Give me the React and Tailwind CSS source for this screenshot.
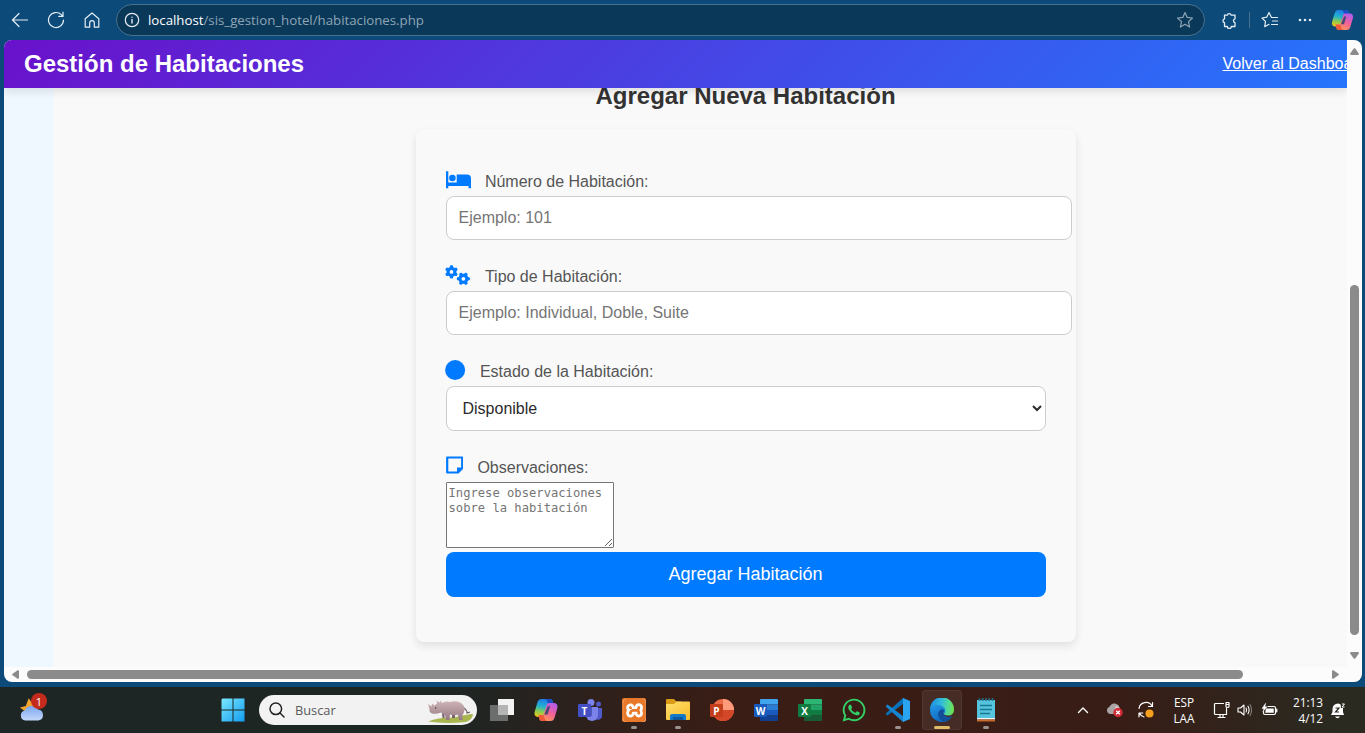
import React from "react";
import { FaGears, FaCircle, FaWhatsapp } from "react-icons/fa6";
import { SiXampp } from "react-icons/si";

const line = {
  fill: "none",
  stroke: "currentColor",
  strokeLinecap: "round",
  strokeLinejoin: "round",
};

function CopilotLogo({ id, className }) {
  return (
    <svg viewBox="0 0 24 24" className={className}>
      <defs>
        <linearGradient id={id + "a"} x1="0.4" y1="0" x2="0.2" y2="1">
          <stop offset="0" stopColor="#1f7be6" />
          <stop offset="0.4" stopColor="#22b3cf" />
          <stop offset="0.7" stopColor="#8fcb4d" />
          <stop offset="1" stopColor="#f5c915" />
        </linearGradient>
        <linearGradient id={id + "b"} x1="0.8" y1="0" x2="0.3" y2="1">
          <stop offset="0" stopColor="#b05cf0" />
          <stop offset="0.5" stopColor="#f0609a" />
          <stop offset="1" stopColor="#ff9a52" />
        </linearGradient>
      </defs>
      <path d="M14 1h2.200c1.400 0 2 .9 2.400 2.200L19.600 7h-3.200c-1.500 0-2.300.8-2.700 2.200L11.400 17c-.4 1.300-1.200 2-2.500 2H4.200C1 19 0 16.500.7 13.800L3.400 4.600C4.100 2.300 5.300 1 7.600 1z" fill={"url(#" + id + "a)"} />
      <path d="M14 1h2.200c1.400 0 2 .9 2.400 2.200L19.600 7h-3.200l-2.200-.3C13.500 3.500 12.800 1.600 11 1z" fill="#1a4fc4" />
      <path d="M10 23H7.800c-1.400 0-2-.9-2.400-2.200L4.400 17h3.200c1.500 0 2.300-.8 2.700-2.200L12.600 7c.4-1.300 1.200-2 2.500-2h4.700c3.200 0 4.200 2.500 3.500 5.200l-2.700 9.200c-.7 2.300-1.900 3.600-4.200 3.600z" fill={"url(#" + id + "b)"} />
      <path d="M10 23H7.800c-1.400 0-2-.9-2.400-2.200L4.400 17h3.200l2.200.3c.7 3.200 1.400 5.100 3.200 5.700z" fill="#ef5a3c" />
      <path d="M13.800 8.300h2.300l-2.500 8.200h-3.300z" fill="#0d3d66" opacity=".75" />
    </svg>
  );
}

function BrowserBar() {
  return (
    <div className="flex h-10 shrink-0 items-center text-[#e6eef5]">
      <svg viewBox="0 0 18 16" className="ml-[11px] h-4 w-[18px]" {...line} strokeWidth="1.2">
        <path d="M16.500 8H1.500M8 1.500L1.500 8L8 14.500" />
      </svg>
      <svg viewBox="0 0 18 18" className="ml-[18px] h-[18px] w-[18px]" {...line} strokeWidth="1.2">
        <path d="M16.500 9A7.500 7.500 0 1 1 14.300 3.700L16 5.400M16 1.200V5.400H11.800" />
      </svg>
      <svg viewBox="0 0 16 18" className="ml-[19px] h-[18px] w-4" {...line} strokeWidth="1.200">
        <path d="M1.200 7.800L8 2L14.800 7.800V16.200H10.300V12A2.300 2.300 0 0 0 5.700 12V16.200H1.200Z" />
      </svg>
      <div className="ml-4 flex h-8 w-[1089px] items-center rounded-full border border-[#48708f] bg-[#0a3859] pl-[7px] pr-[10px]">
        <svg viewBox="0 0 16 16" className="h-4 w-4" {...line} strokeWidth="1.200">
          <circle cx="8" cy="8" r="6.700" />
          <path d="M8 7.500V11M8 5.100V5.300" strokeWidth="1.400" />
        </svg>
        <span className="ml-[8px] whitespace-nowrap font-['Open_Sans',sans-serif] text-[13.25px] leading-5 text-[#8fa5b5]">
          <span className="text-white">localhost</span>/sis_gestion_hotel/habitaciones.php
        </span>
        <svg viewBox="0 0 18 18" className="ml-auto h-[18px] w-[18px] text-[#8fa5b5]" {...line} strokeWidth="1.200">
          <path d="M9 1.500L11.200 6.400L16.500 7L12.500 10.600L13.600 16L9 13.300L4.400 16L5.500 10.600L1.500 7L6.800 6.400Z" />
        </svg>
      </div>
      <svg viewBox="0 0 16 17" className="ml-4 h-[17px] w-4" {...line} strokeWidth="1.300">
        <path d="M3.500 3.200H6.300A2 2 0 0 1 10.200 3.200H14V6.800A2 2 0 0 0 14 10.700V14.500H10.300A2 2 0 0 1 6.300 14.500H3.500V10.700A2 2 0 0 1 3.500 6.800Z" />
      </svg>
      <div className="ml-[12px] h-4 w-px bg-[#48708f]" />
      <svg viewBox="0 0 18 18" className="ml-[11px] h-[18px] w-[18px]" {...line} strokeWidth="1.200">
        <path d="M16.500 6.500H10.500L8 1.500L5.700 6.200L1 7L4.500 10.400L3.700 15.700L8 13.300M11.500 10H16.500M10.500 13.500H16.500" />
      </svg>
      <svg viewBox="0 0 14 4" className="ml-[19px] h-1 w-[14px]" fill="currentColor">
        <circle cx="2" cy="2" r="1.300" />
        <circle cx="7" cy="2" r="1.300" />
        <circle cx="12" cy="2" r="1.300" />
      </svg>
      <CopilotLogo id="bar" className="ml-[19px] h-[22px] w-[23px]" />
    </div>
  );
}

function BedIcon() {
  return (
    <svg viewBox="0 0 25 20" className="h-5 w-[25px]" fill="currentColor">
      <path d="M0 1.200H2.300V12.500H10.700V4.500H21Q25 4.500 25 8.500V18.300H22.500V16H2.300V18.300H0Z" />
      <circle cx="6.400" cy="8" r="3.300" />
    </svg>
  );
}

function NoteIcon() {
  return (
    <svg viewBox="0 0 17.5 20" className="-mt-px h-5 w-[17.5px]" fill="none" stroke="currentColor" strokeWidth="2.200">
      <path d="M1.200 2.500H16.200V13.300L12 17.500H1.200Z" strokeLinejoin="round" />
      <path d="M11 18V12.500H16.800L16.500 13.300L12 17.800Z" fill="currentColor" stroke="none" />
    </svg>
  );
}

function Label({ icon, children }) {
  return (
    <label className="flex h-[26px] items-start gap-[14.4px] text-[#555]">
      <span className="text-[20px] text-[#007bff]">{icon}</span>
      <span className="pt-[2px] leading-5">{children}</span>
    </label>
  );
}

function RoomForm() {
  const field = "block rounded-lg border border-[#ccc] bg-white text-[16px]";
  return (
    <form className="mx-auto mt-[17px] h-[513px] w-[660px] shrink-0 rounded-lg bg-[#f9f9f9] px-[30px] pt-[41px] shadow-[0_4px_8px_rgba(0,0,0,0.1)]">
      <Label icon={<BedIcon />}>Número de Habitación:</Label>
      <input className={field + " h-11 w-[626px] px-3 placeholder:text-[#757575]"} placeholder="Ejemplo: 101" />
      <div className="h-[25px]" />
      <Label icon={<FaGears className="-ml-[0.5px] h-5 w-[25.5px]" />}>Tipo de Habitación:</Label>
      <input className={field + " h-11 w-[626px] px-3 placeholder:text-[#757575]"} placeholder="Ejemplo: Individual, Doble, Suite" />
      <div className="h-[25px]" />
      <Label icon={<FaCircle className="-ml-[0.3px] -mt-[0.5px] h-5 w-[20.3px]" />}>Estado de la Habitación:</Label>
      <select className={field + " h-[45px] w-[600px] p-3 text-[#2b2b2b]"}>
        <option>Disponible</option>
      </select>
      <div className="h-[25px]" />
      <Label icon={<NoteIcon />}>Observaciones:</Label>
      <textarea
        className="block h-[66px] w-[168px] resize rounded-[1px] border border-[#767676] bg-white px-[2px] py-[3px] font-['DejaVu_Sans_Mono',monospace] text-[12.17px] leading-[15px] placeholder:text-[#757575]"
        placeholder="Ingrese observaciones sobre la habitación"
      />
      <button type="button" className="mt-1 block h-[45px] w-[600px] rounded-lg bg-[#007bff] text-[18px] text-white">
        Agregar Habitación
      </button>
    </form>
  );
}

function WebPage() {
  return (
    <div className="mx-1 mr-[3px] flex h-[642px] shrink-0 flex-col overflow-hidden rounded-lg bg-[#fcfcfc] font-['Liberation_Sans',Arial,sans-serif] text-[16px]">
      <div className="flex h-[627px]">
        <div className="flex w-[1343px] flex-col overflow-hidden">
          <header className="relative z-10 flex h-12 shrink-0 items-center overflow-visible bg-[linear-gradient(135deg,#6a11cb,#2575fc)] pl-5 text-white shadow-[0_4px_8px_rgba(0,0,0,0.1)]">
            <h1 className="text-[24px] font-bold">Gestión de Habitaciones</h1>
            <a className="ml-auto w-[124.5px] whitespace-nowrap underline">Volver al Dashboard</a>
          </header>
          <div className="flex h-[579px]">
            <aside className="w-[50px] bg-[#f0f8ff]" />
            <main className="flex w-[1293px] flex-col bg-[#f9f9f9] pl-[90px]">
              <h2 className="-mt-[8px] text-center text-[24px] font-bold leading-8 text-[#333]">Agregar Nueva Habitación</h2>
              <RoomForm />
            </main>
          </div>
        </div>
        <div className="flex w-[15px] flex-col items-center">
          <svg viewBox="0 0 9 7" className="mt-2 h-[7px] w-[9px]">
            <path d="M3.700.6Q4.500-.3 5.300.6L8.800 5.600Q9 7 8 7H1Q0 7 .2 5.600Z" fill="#8b8b8b" />
          </svg>
          <div className="mt-[230px] h-[350px] w-[9px] rounded-full bg-[#8b8b8b]" />
          <svg viewBox="0 0 9 7" className="mt-[17px] h-[7px] w-[9px]">
            <path d="M3.700 6.400Q4.500 7.300 5.300 6.400L8.800 1.400Q9 0 8 0H1Q0 0 .2 1.400Z" fill="#8b8b8b" />
          </svg>
        </div>
      </div>
      <div className="flex h-[15px] items-center">
        <svg viewBox="0 0 7 9" className="ml-2 h-[9px] w-[7px]">
          <path d="M.6 3.700Q-.3 4.500.6 5.300L5.600 8.800Q7 9 7 8V1Q7 0 5.600.2Z" fill="#8b8b8b" />
        </svg>
        <div className="ml-2 h-[9px] w-[1216px] rounded-full bg-[#8b8b8b]" />
        <svg viewBox="0 0 7 9" className="ml-[89px] h-[9px] w-[7px]">
          <path d="M6.400 3.700Q7.300 4.500 6.400 5.300L1.400 8.800Q0 9 0 8V1Q0 0 1.400.2Z" fill="#8b8b8b" />
        </svg>
      </div>
    </div>
  );
}

function Weather() {
  return (
    <div className="relative ml-[19px] h-[34px] w-[29px] -translate-y-px">
      <svg viewBox="0 0 30 34" className="h-full w-full">
        <defs>
          <linearGradient id="cloud" x1="0" y1="0" x2="0" y2="1">
            <stop offset="0" stopColor="#7ba4ef" />
            <stop offset="1" stopColor="#c4d9fb" />
          </linearGradient>
        </defs>
        <path d="M10 6L13 10L19 11V22L8 21L5 18.500L1 15.500L7 14Z" fill="#f2a32d" />
        <path d="M6.500 29A5.300 5.300 0 0 1 6 18.600A7.500 7.500 0 0 1 19.500 17.500A5.800 5.800 0 0 1 20 29Z" fill="url(#cloud)" />
      </svg>
      <span className="absolute left-[12px] top-[1px] flex h-4 w-4 items-center justify-center rounded-full bg-[#c42b1c] font-['Open_Sans',sans-serif] text-[11px] leading-none text-white">1</span>
    </div>
  );
}

function Rhino() {
  return (
    <svg viewBox="0 0 48 28" className="h-7 w-12">
      <defs>
        <linearGradient id="hide" x1="0" y1="0" x2="0" y2="1">
          <stop offset="0" stopColor="#d0b6b8" />
          <stop offset="1" stopColor="#957984" />
        </linearGradient>
      </defs>
      <path d="M1 25.500Q12 21 27 21.500Q40 18 46 18Q46 23 39 26Q18 28 1 25.500Z" fill="#a9b650" />
      <path d="M37 12Q40 14 40 17L43 16" fill="none" stroke="#65545b" strokeWidth="1.100" />
      <path d="M2.500 13L1 8L4.500 10.500L5 7.500L7.500 9.500L10 7.500L9.500 4.500L12.500 6.500L14 4.500L15 7Q19 4.500 23 6Q29 4.500 33 6.500Q38 9 37.500 14Q37 17 35.500 19V24H32L31 18.500Q27 20 23 18.500L22.500 24H19L18 19L14 16.500Q9 18.500 5 17.500Q2 16.500 2.500 13Z" fill="url(#hide)" />
      <path d="M28 19V22H25V19ZM17.500 18.500V22H15.500L15 17Z" fill="#7d636d" />
      <circle cx="8.700" cy="12" r=".8" fill="#4a3b42" />
    </svg>
  );
}

function OfficeBadge({ letter, className }) {
  return (
    <span className={"absolute left-0 top-[6px] flex h-[13px] w-[13px] items-center justify-center rounded-[1px] font-['Open_Sans',sans-serif] text-[10px] font-bold leading-none text-white " + className}>
      {letter}
    </span>
  );
}

function AppCell({ children, dot, active }) {
  return (
    <div className="relative flex h-full w-11 shrink-0 items-center justify-center">
      {active && <div className="absolute left-[2px] top-[3px] h-10 w-10 rounded border border-white/5 bg-white/[0.07]" />}
      <div className="relative h-6 w-6">{children}</div>
      {dot && <div className="absolute bottom-[4px] h-[3px] w-[6px] rounded-full bg-[#9b918e]" />}
      {active && <div className="absolute bottom-[4px] h-[3px] w-4 rounded-full bg-[#e0bc68]" />}
    </div>
  );
}

function SheetIcon({ colors, letter, badge }) {
  return (
    <>
      <svg viewBox="0 0 24 24" className="h-6 w-6">
        <path d="M7 1H23Q24 1 24 2V6.500H6V2Q6 1 7 1Z" fill={colors[0]} />
        <path d="M6 6.500H24V12H6Z" fill={colors[1]} />
        <path d="M6 12H24V17.500H6Z" fill={colors[2]} />
        <path d="M6 17.500H24V22Q24 23 23 23H7Q6 23 6 22Z" fill={colors[3]} />
      </svg>
      <OfficeBadge letter={letter} className={badge} />
    </>
  );
}

function EdgeLogo() {
  return (
    <svg viewBox="0 0 24 24" className="h-6 w-6">
      <defs>
        <linearGradient id="wave" x1="0" y1="0.4" x2="1" y2="0.5">
          <stop offset="0" stopColor="#1d8fe0" />
          <stop offset="0.45" stopColor="#2fb9dc" />
          <stop offset="0.75" stopColor="#4fd99a" />
          <stop offset="1" stopColor="#6fe04e" />
        </linearGradient>
        <linearGradient id="body" x1="0" y1="0" x2="0.5" y2="1">
          <stop offset="0" stopColor="#2398e8" />
          <stop offset="1" stopColor="#1068bd" />
        </linearGradient>
      </defs>
      <path d="M0 11A12 12 0 0 1 24 11.500C24 15.500 21.500 17.500 18 17.500C15 17.500 13.500 16.500 14 15.300C15.700 13 14 8.500 9.500 8C5 7.500 1.500 9 0 11Z" fill="url(#wave)" />
      <path d="M0 12C.2 8.500 4 6.500 8.500 7C13 7.500 16 10.500 15 14L13 17L20.500 20.500A12 12 0 0 1 0 12Z" fill="url(#body)" />
      <path d="M12 11.300C9 12 7.500 15 8.300 18C9.500 21.800 12 23.500 14.500 23.700C18 23 21 20.800 22.500 18C20.500 19 17 19.500 14.500 17.800C12.800 16.500 12.800 15 13.800 14C14.500 12.500 13.500 11 12 11.300Z" fill="#124f9a" />
    </svg>
  );
}

function Apps() {
  return (
    <>
      <AppCell>
        <svg viewBox="0 0 24 24" className="h-6 w-6">
          <path d="M8 1H24V17H8Z" fill="#f3f3f3" />
          <path d="M0 7H18V23H0Z" fill="#6c6d6d" />
          <path d="M8 7H18V17H8Z" fill="#b4b4b4" />
        </svg>
      </AppCell>
      <AppCell><CopilotLogo id="task" className="h-6 w-6" /></AppCell>
      <AppCell>
        <svg viewBox="0 0 24 24" className="h-6 w-6">
          <circle cx="20.500" cy="6" r="2.500" fill="#5059c9" />
          <path d="M16 10H24V16A4 4 0 0 1 16 19Z" fill="#5059c9" />
          <circle cx="13" cy="4.500" r="3.500" fill="#7b83eb" />
          <path d="M8 9H20V17A6 6 0 0 1 8 17Z" fill="#7b83eb" />
          <path d="M8 9H14V18H8Z" fill="#5258b5" />
        </svg>
        <OfficeBadge letter="T" className="bg-[#454fc4]" />
      </AppCell>
      <AppCell dot>
        <div className="flex h-6 w-6 items-center justify-center rounded-[2px] bg-[#e8782a]">
          <SiXampp className="h-[23px] w-[23px] rounded bg-white text-[#e8782a]" />
        </div>
      </AppCell>
      <AppCell dot>
        <svg viewBox="0 0 24 24" className="h-6 w-6">
          <defs>
            <linearGradient id="folder" x1="0" y1="0" x2="1" y2="1">
              <stop offset="0" stopColor="#ffdf70" />
              <stop offset="1" stopColor="#f8bc28" />
            </linearGradient>
          </defs>
          <path d="M0 2Q0 1 1 1H8L10.500 3.500H15V9H0Z" fill="#d99b13" />
          <path d="M0 6H8L10.500 3.500H23Q24 3.500 24 4.500V21Q24 22 23 22H1Q0 22 0 21Z" fill="url(#folder)" />
          <path d="M4 22V18Q4 16 6 16H18Q20 16 20 18V22Z" fill="#1479c9" />
          <path d="M7 19H17V22H7Z" fill="#0c589c" />
        </svg>
      </AppCell>
      <AppCell>
        <svg viewBox="0 0 24 24" className="h-6 w-6">
          <circle cx="13" cy="12" r="11" fill="#ed6c47" />
          <path d="M13 1A11 11 0 0 1 24 12H13Z" fill="#ff9a7a" />
          <path d="M2 12H24A11 11 0 0 1 2 12Z" fill="#d4482a" />
        </svg>
        <OfficeBadge letter="P" className="bg-[#c43e1c]" />
      </AppCell>
      <AppCell><SheetIcon letter="W" badge="bg-[#185abd]" colors={["#41a5ee", "#2b7cd3", "#185abd", "#103f91"]} /></AppCell>
      <AppCell><SheetIcon letter="X" badge="bg-[#107c41]" colors={["#2bb673", "#21a366", "#107c41", "#185c37"]} /></AppCell>
      <AppCell><FaWhatsapp className="-ml-[1px] -mt-px h-[26px] w-[26px] text-[#32d067]" /></AppCell>
      <AppCell dot>
        <svg viewBox="0 0 24 24" className="h-6 w-6">
          <path d="M1.500 17.500L17 6V0L0 15.200Q-.3 16 .3 16.500Z" fill="#0a70b7" />
          <path d="M1.500 6.500L17 18V24L0 8.800Q-.3 8 .3 7.500Z" fill="#1784cf" />
          <path d="M17 0L24 3V21L17 24Z" fill="#2aa5f2" />
        </svg>
      </AppCell>
      <AppCell active><EdgeLogo /></AppCell>
      <AppCell dot>
        <svg viewBox="0 0 24 24" className="h-6 w-6">
          <path d="M3 2H21V20H3Z" fill="#55c3dd" />
          <path d="M3 20H21V21.500H3Z" fill="#f4f4f4" />
          <path d="M3 21.500H21V23.500H3Z" fill="#c66b2c" />
          <path d="M5.500 0V3M8.800 0V3M12 0V3M15.200 0V3M18.500 0V3" stroke="#23738c" strokeWidth="1.500" />
          <path d="M6 7.500H18M6 11.500H18M6 15.500H16" stroke="#187791" strokeWidth="1.500" />
        </svg>
      </AppCell>
    </>
  );
}

function Tray() {
  return (
    <div className="ml-auto flex h-full items-center pr-[19px] font-['Open_Sans',sans-serif] text-[11.8px] leading-4 text-white">
      <svg viewBox="0 0 12 8" className="h-2 w-3" {...line} strokeWidth="1.400">
        <path d="M1.500 6.500L6 2L10.500 6.500" />
      </svg>
      <svg viewBox="0 0 18 16" className="ml-[17px] h-4 w-[18px]">
        <path d="M4 12A3.800 3.800 0 0 1 3.500 4.700A5.500 5.500 0 0 1 13 4L14 12Z" fill="#a9a4a3" />
        <path d="M7 11L10 4L13.500 5.500V11Z" fill="#dedbda" />
        <circle cx="12" cy="10.500" r="4.700" fill="#d22d38" />
        <path d="M10.200 8.700L13.800 12.300M13.800 8.700L10.200 12.300" stroke="#fff" strokeWidth="1.300" />
      </svg>
      <svg viewBox="0 0 18 18" className="ml-[13px] h-[18px] w-[18px]" {...line} strokeWidth="1.200">
        <path d="M2 7.500A7 7 0 0 1 15 5M15.500 1.500V5.500H11.500M2 15.800V12H5.800M2.500 12.300Q4.200 15.500 7 16" />
        <circle cx="12.500" cy="12.500" r="4" fill="#f7a01d" stroke="none" />
      </svg>
      <div className="ml-[17px] w-[24px] text-center">
        <div>ESP</div>
        <div>LAA</div>
      </div>
      <svg viewBox="0 0 18 18" className="ml-[17px] h-[18px] w-[18px]" {...line} strokeWidth="1.200">
        <path d="M10.500 2.500H2.500Q1.500 2.500 1.500 3.500V12.500Q1.500 13.500 2.500 13.500H13.500V7.500M5 16.500H12M7 13.500V16.500M10 13.500V16.500" />
        <path d="M13 1.500H16V5.500Q16 6.500 14.500 6.500Q13 6.500 13 5.500ZM13 3.500H16" />
      </svg>
      <svg viewBox="0 0 16 14" className="ml-[6px] h-[14px] w-4" {...line} strokeWidth="1.100">
        <path d="M1 5V9H3.500L7 12V2L3.500 5ZM9 5Q10.200 7 9 9M11 3.200Q13.200 7 11 10.800" />
        <path d="M13 1.500Q16.200 7 13 12.500" opacity=".4" />
      </svg>
      <svg viewBox="0 0 17 14" className="ml-[8px] h-[14px] w-[17px]" {...line} strokeWidth="1.200">
        <path d="M7 3.500H13Q14.500 3.500 14.500 5V10Q14.500 11.500 13 11.500H4Q2.500 11.500 2.500 10V8.500M15.800 6.200V8.800" />
        <path d="M5 5.500H12.700V9.700H4.200Z" fill="currentColor" stroke="none" />
        <path d="M4.500.5L1 5.500H3L2 8.500L6 3.800H4Z" fill="currentColor" strokeWidth=".5" />
      </svg>
      <div className="ml-[13px] w-[32px] whitespace-nowrap text-right">
        <div className="-ml-1">21:13</div>
        <div>4/12</div>
      </div>
      <svg viewBox="0 0 16 18" className="ml-[7px] h-[18px] w-4">
        <path d="M8 2.500A5.500 5.500 0 0 0 2.500 8V11L1 14H14L13 11V8A5.500 5.500 0 0 0 8 2.500ZM5 15.500H10Q9 17.300 7.500 17.300Q6 17.300 5 15.500Z" fill="#fff" />
        <path d="M5.500 7H9L5.500 11H9" fill="none" stroke="#292820" strokeWidth="1.200" />
        <path d="M10.500 2H16V7H11Z" fill="#292820" />
        <path d="M12 3H14.500L12 6H14.500" fill="none" stroke="#fff" strokeWidth="1" />
      </svg>
    </div>
  );
}

function Taskbar() {
  return (
    <div className="mt-[5px] flex h-[46px] shrink-0 items-center bg-[linear-gradient(90deg,#1d2624_0%,#1e2624_33%,#2f201b_44%,#3a1d15_54%,#381d16_82%,#2a2a21_98%)]">
      <Weather />
      <svg viewBox="0 0 24 24" className="ml-[173px] h-6 w-6">
        <defs>
          <linearGradient id="start" x1="0" y1="0" x2="24" y2="24" gradientUnits="userSpaceOnUse">
            <stop offset="0" stopColor="#7deaff" />
            <stop offset="1" stopColor="#109af0" />
          </linearGradient>
        </defs>
        <path d="M1.500.5H11.500V11.500H.5V1.500ZM12.500.5H23.500V11.500H12.500ZM.5 12.500H11.500V23.500H.5ZM12.500 12.500H23.500V23.500H12.500Z" fill="url(#start)" />
      </svg>
      <div className="ml-[14px] flex h-[30px] w-[218px] items-center overflow-hidden rounded-full bg-[#f2f2f2] pl-[10px]">
        <svg viewBox="0 0 16 16" className="h-4 w-4 text-[#222]" {...line} strokeWidth="1.500">
          <circle cx="6.800" cy="6.800" r="5.800" />
          <path d="M11 11L15 15" />
        </svg>
        <span className="ml-[10px] font-['Open_Sans',sans-serif] text-[12.8px] leading-5 text-[#5a5a5a]">Buscar</span>
        <div className="ml-auto mr-[2px]"><Rhino /></div>
      </div>
      <div className="ml-[3px] flex h-full"><Apps /></div>
      <Tray />
    </div>
  );
}

export default function App() {
  return (
    <div className="flex h-[733px] w-[1365px] flex-col overflow-hidden bg-[#0b4a79]">
      <BrowserBar />
      <WebPage />
      <Taskbar />
    </div>
  );
}
